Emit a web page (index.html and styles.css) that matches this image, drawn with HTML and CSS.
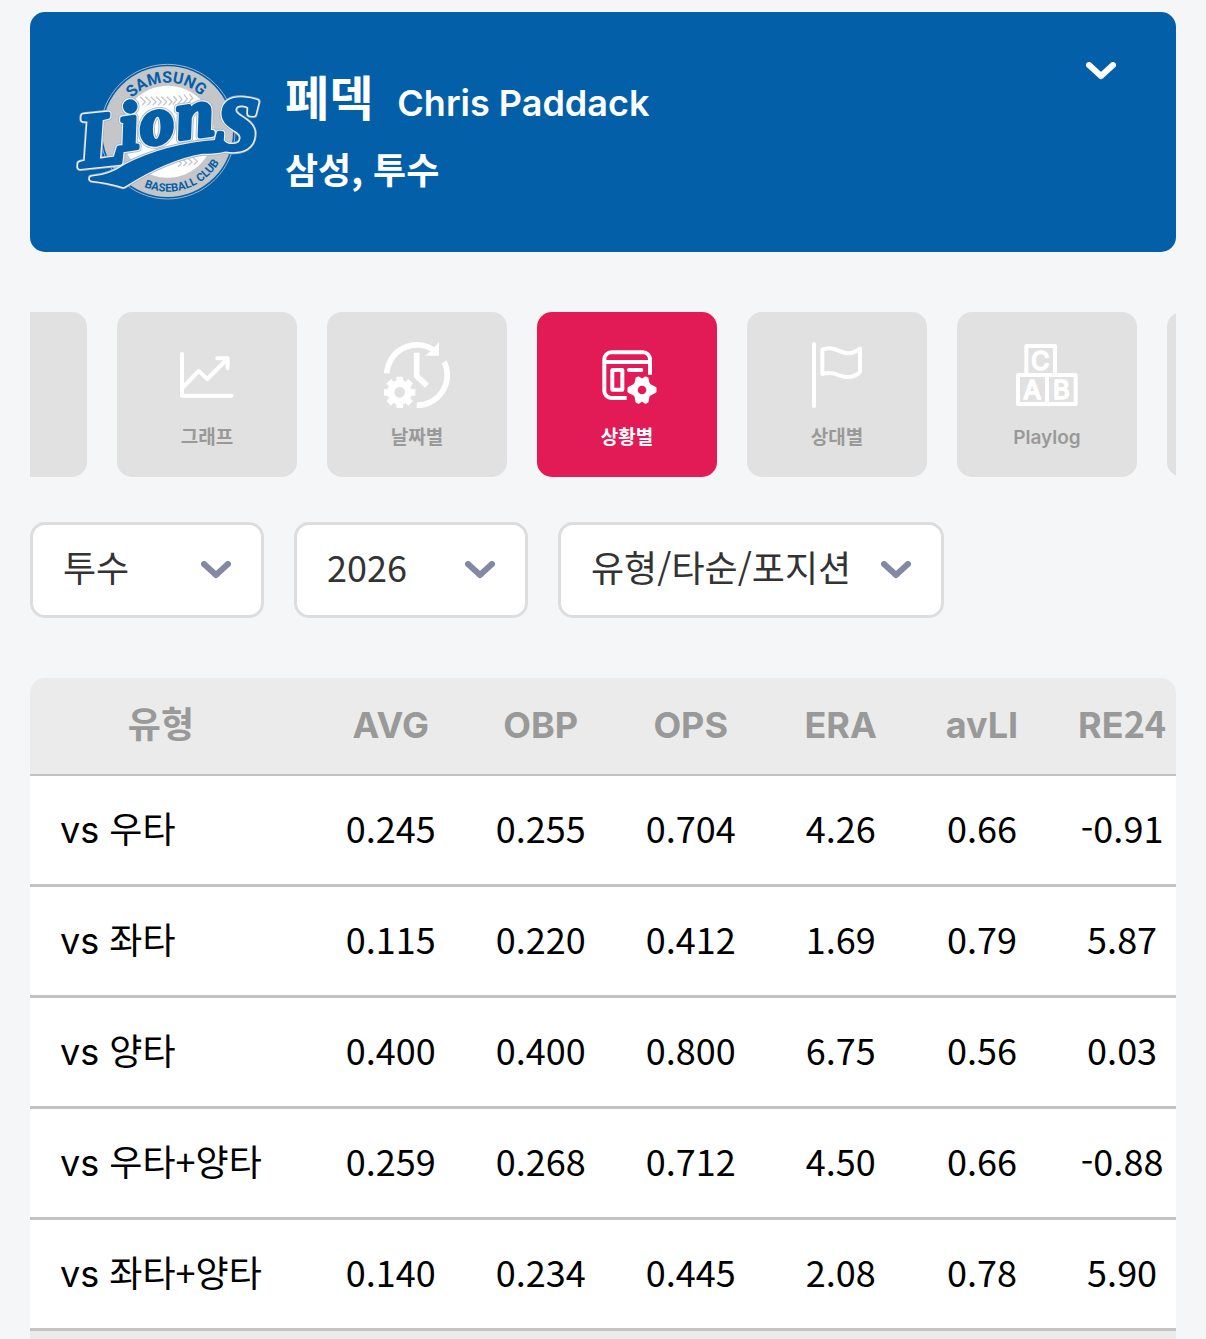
FILE: index.html
```html
<!DOCTYPE html>
<html lang="ko">
<head>
    <meta charset="UTF-8">
    <meta name="viewport" content="width=device-width, initial-scale=1.0">
    <title>페덱 - 상황별 기록</title>
    <link rel="stylesheet" href="styles.css">
</head>
<body>
    <div class="container">
        <header class="player">
            <svg class="team-logo" viewBox="45 39 540 414" role="img" aria-label="Samsung Lions">
                <defs>
                    <path id="arcTop" d="M176 245 A147 147 0 0 1 470 245"/>
                    <path id="arcBottom" d="M143 245 A180 180 0 0 0 503 245"/>
                    <g id="wordmark">
                        <path d="M96 386 Q150 382 196 350 Q320 286 478 276 Q492 298 512 290 Q480 308 430 304 Q320 322 190 405 Q140 390 96 386Z"/>
                        <text class="logo-word" x="188 248 356" y="300 287 268" rotate="-8">ion</text>
                        <text class="logo-word big" x="62" y="350" rotate="-6">L</text>
                        <text class="logo-word big" x="462" y="294" rotate="4">S</text>
                    </g>
                </defs>
                <circle class="logo-ring" cx="323" cy="245" r="202"/>
                <circle class="logo-disc" cx="323" cy="245" r="196"/>
                <circle class="logo-ball" cx="323" cy="245" r="138"/>
                <g class="logo-seam">
                    <path d="M240 140 L256 155 L246 166 M256 140 L272 155 L262 166 M272 140 L288 155 L278 166 M288 140 L304 155 L294 166 M304 140 L320 155 L310 166 M320 140 L336 155 L326 166 M340 138 L350 150 L338 164 M356 136 L366 148 L354 162 M372 134 L382 146 L370 160 M388 132 L398 144 L386 158"/>
                    <path d="M350 328 L364 340 L354 350 M364 324 L380 338 L370 348 M380 322 L396 336 L386 346 M396 320 L412 334 L402 344"/>
                </g>
                <text class="logo-arc"><textPath href="#arcTop" startOffset="49%">SAMSUNG</textPath></text>
                <text class="logo-arc logo-small"><textPath href="#arcBottom" startOffset="60%">BASEBALL CLUB</textPath></text>
                <use class="logo-edge" href="#wordmark"/>
                <use class="logo-line" href="#wordmark"/>
                <use class="logo-face" href="#wordmark"/>
            </svg>
            <div class="player-info">
                <h1>페덱 <span class="name-en">Chris Paddack</span></h1>
                <p>삼성, 투수</p>
            </div>
            <button type="button" class="player-toggle" aria-label="선수 정보 열기">
                <svg class="chevron" viewBox="0 0 30 18"><path d="M3 3 L15 14 L27 3"/></svg>
            </button>
        </header>

        <nav class="tabs" id="tabs">
            <a class="tab" href="#" aria-label="이전 메뉴"></a>
            <a class="tab" href="#graph">
                <svg viewBox="0 0 198 198">
                    <g class="line">
                        <path d="M24 36 V161 H173"/>
                        <path d="M26 137 L74 87 L100 111 L160 51"/>
                        <path d="M130 49 H161 V79"/>
                    </g>
                </svg>
                그래프
            </a>
            <a class="tab" href="#date">
                <svg viewBox="0 0 198 198">
                    <g class="line butt">
                        <path d="M8 94 A91 91 0 0 1 148 23"/>
                        <path d="M181 60 A91 91 0 0 1 98 190"/>
                        <path d="M98 32 V102 L129 131"/>
                        <path class="teeth" d="M47 104 V198 M0 151 H94 M14 118 L80 184 M80 118 L14 184"/>
                    </g>
                    <path class="solid" d="M165 0 V41 H123 L142 26Z M174 69 L187 53 L191 68Z"/>
                    <circle class="solid" cx="47" cy="151" r="37"/>
                    <circle class="hole" cx="47" cy="151" r="16"/>
                </svg>
                날짜별
            </a>
            <a class="tab active" href="#situation" aria-current="page">
                <svg viewBox="0 0 198 198">
                    <g class="line">
                        <path class="flat" d="M168 98 V52 A21 21 0 0 0 147 31 H52 A21 21 0 0 0 31 52 V147 A21 21 0 0 0 52 168 H98 M31 60 H168"/>
                        <rect x="55" y="84" width="30" height="59"/>
                        <path d="M105 84 H142"/>
                    </g>
                    <path class="solid gear" d="M128 109 L134 107 L144 114 L154 107 L160 109 L163 124 L168 130 L184 138 L184 149 L168 157 L163 163 L160 179 L154 182 L144 174 L134 182 L128 179 L125 163 L120 157 L104 149 L104 138 L120 130 L125 124Z"/>
                    <circle class="hole" cx="144" cy="144" r="13"/>
                </svg>
                상황별
            </a>
            <a class="tab" href="#opponent">
                <svg viewBox="0 0 198 198">
                    <g class="line">
                        <path d="M30 6 V192"/>
                        <path d="M55 23 C88 9 108 34 134 34 C148 34 158 27 168 20 V91 C148 108 128 108 108 101 C90 92 72 91 55 96Z"/>
                    </g>
                </svg>
                상대별
            </a>
            <a class="tab" href="#playlog">
                <svg viewBox="0 0 198 198">
                    <g class="line">
                        <rect x="37" y="12" width="86" height="87"/>
                        <rect x="12" y="99" width="173" height="87"/>
                        <path d="M99 99 V186"/>
                    </g>
                    <g class="block-letters">
                        <text x="79" y="84">C</text>
                        <text x="55" y="171">A</text>
                        <text x="142" y="171">B</text>
                    </g>
                </svg>
                Playlog
            </a>
            <a class="tab" href="#" aria-label="다음 메뉴"></a>
        </nav>

        <form class="filters">
            <div class="select">
                <select name="position" aria-label="포지션">
                    <option>투수</option>
                </select>
                <svg class="chevron" viewBox="0 0 30 18"><path d="M3 3 L15 14 L27 3"/></svg>
            </div>
            <div class="select">
                <select name="year" aria-label="시즌">
                    <option>2026</option>
                </select>
                <svg class="chevron" viewBox="0 0 30 18"><path d="M3 3 L15 14 L27 3"/></svg>
            </div>
            <div class="select">
                <select name="split" aria-label="구분">
                    <option>유형/타순/포지션</option>
                </select>
                <svg class="chevron" viewBox="0 0 30 18"><path d="M3 3 L15 14 L27 3"/></svg>
            </div>
        </form>

        <div class="table-wrap">
            <table>
                <thead>
                    <tr><th>유형</th><th>AVG</th><th>OBP</th><th>OPS</th><th>ERA</th><th>avLI</th><th>RE<span class="num">24</span></th></tr>
                </thead>
                <tbody>
                    <tr><td><span class="en">vs</span> 우타</td><td>0.245</td><td>0.255</td><td>0.704</td><td>4.26</td><td>0.66</td><td>-0.91</td></tr>
                    <tr><td><span class="en">vs</span> 좌타</td><td>0.115</td><td>0.220</td><td>0.412</td><td>1.69</td><td>0.79</td><td>5.87</td></tr>
                    <tr><td><span class="en">vs</span> 양타</td><td>0.400</td><td>0.400</td><td>0.800</td><td>6.75</td><td>0.56</td><td>0.03</td></tr>
                    <tr><td><span class="en">vs</span> 우타+양타</td><td>0.259</td><td>0.268</td><td>0.712</td><td>4.50</td><td>0.66</td><td>-0.88</td></tr>
                    <tr><td><span class="en">vs</span> 좌타+양타</td><td>0.140</td><td>0.234</td><td>0.445</td><td>2.08</td><td>0.78</td><td>5.90</td></tr>
                </tbody>
                <tfoot>
                    <tr><td colspan="7"></td></tr>
                </tfoot>
            </table>
        </div>
    </div>

    <script>
        // start a little way along so the active tab is near the middle
        document.getElementById('tabs').scrollLeft = 123;
    </script>
</body>
</html>
```
FILE: styles.css
```css
* {
    box-sizing: border-box;
}
body {
    margin: 0;
    background-color: #f4f6f8;
    font-family: "Noto Sans CJK KR", sans-serif;
    font-size: 36px;
    color: #000;
}
.container {
    padding: 12px 30px 0;
}
.en {
    font-family: Inter, sans-serif;
}
.num {
    font-family: "Noto Sans CJK KR", sans-serif;
    line-height: 1;
}

/* player card */
.player {
    display: flex;
    align-items: center;
    gap: 30px;
    padding: 45px;
    height: 240px;
    border-radius: 15px;
    background-color: #045fa9;
    color: #fff;
}
.team-logo {
    width: 180px;
    height: 138px;
    flex: none;
    overflow: visible;
}
.player-info {
    flex: 1;
}
h1 {
    display: flex;
    align-items: baseline;
    gap: 24px;
    margin: 0;
    font-size: 48px;
    line-height: 72px;
    font-weight: 700;
}
.name-en {
    font-family: Inter, sans-serif;
    font-size: 36px;
    font-weight: 600;
}
.player p {
    margin: 0;
    padding-bottom: 8px;
    line-height: 58px;
    font-weight: 700;
}
.player-toggle {
    align-self: flex-start;
    display: flex;
    margin-right: 15px;
    padding: 5px 0;
    border: none;
    background: none;
    color: #fff;
    cursor: pointer;
}
.chevron {
    width: 30px;
    height: 18px;
    fill: none;
    stroke: currentColor;
    stroke-width: 6;
    stroke-linecap: round;
    stroke-linejoin: round;
}

/* team logo */
.logo-ring {
    fill: #045fa9;
    stroke: #9fb6cc;
    stroke-width: 3;
}
.logo-disc {
    fill: #c4c6c9;
}
.logo-ball {
    fill: #fff;
}
.logo-seam {
    fill: none;
    stroke: #c4c6c9;
    stroke-width: 4;
}
.logo-arc {
    font-family: Roboto, sans-serif;
    font-size: 48px;
    font-weight: 700;
    text-anchor: middle;
    fill: #045fa9;
}
.logo-small {
    font-size: 34px;
}
.logo-word {
    font-family: "Liberation Serif", serif;
    font-size: 204px;
    font-style: italic;
    font-weight: 700;
}
.logo-word.big {
    font-size: 228px;
}
.logo-edge {
    stroke: #a9b3c0;
    stroke-width: 25;
    stroke-linejoin: round;
}
.logo-line {
    stroke: #eef3f8;
    stroke-width: 20;
    stroke-linejoin: round;
}
.logo-face {
    fill: #045fa9;
    stroke: #045fa9;
    stroke-width: 13;
    stroke-linejoin: round;
}

/* tabs */
.tabs {
    display: flex;
    gap: 30px;
    margin-top: 60px;
    overflow-x: auto;
    scrollbar-width: none;
}
.tab {
    display: flex;
    flex: none;
    flex-direction: column;
    align-items: center;
    gap: 16px;
    width: 180px;
    height: 165px;
    padding-top: 30px;
    border-radius: 15px;
    background-color: #e1e1e1;
    color: #999;
    font-family: Inter, "Noto Sans CJK KR", sans-serif;
    font-size: 19px;
    line-height: 28px;
    font-weight: 600;
    text-decoration: none;
}
.tab.active {
    background-color: #e21a56;
    color: #fff;
}
.tab svg {
    width: 66px;
    height: 66px;
}
.line {
    fill: none;
    stroke: #fff;
    stroke-width: 12;
    stroke-linecap: round;
    stroke-linejoin: round;
}
.butt {
    stroke-width: 17;
    stroke-linecap: butt;
    stroke-linejoin: miter;
}
.flat {
    stroke-linecap: butt;
}
.teeth {
    stroke-width: 20;
}
.solid {
    fill: #fff;
}
.gear {
    stroke: #fff;
    stroke-width: 7;
    stroke-linejoin: round;
}
.hole {
    fill: #e1e1e1;
}
.active .hole {
    fill: #e21a56;
}
.block-letters {
    font-family: Inter, sans-serif;
    font-size: 76px;
    font-weight: 500;
    text-anchor: middle;
    fill: #fff;
    stroke: #fff;
    stroke-width: 4;
    stroke-linejoin: round;
}

/* filters */
.filters {
    display: flex;
    gap: 30px;
    margin-top: 45px;
}
.select {
    display: grid;
    align-items: center;
    min-width: 234px;
    color: #8388a4;
}
.select select,
.select .chevron {
    grid-area: 1 / 1;
}
.select .chevron {
    justify-self: end;
    margin-right: 33px;
    pointer-events: none;
}
.select select {
    appearance: none;
    width: 100%;
    height: 96px;
    padding: 0 89px 9px 30px;
    border: 3px solid #ddd;
    border-radius: 15px;
    background-color: #fff;
    color: #333;
    font-family: inherit;
    font-size: 36px;
}

/* stats table */
.table-wrap {
    margin-top: 60px;
    border-radius: 15px 15px 0 0;
    overflow-x: auto;
    scrollbar-width: none;
}
table {
    min-width: 100%;
    border-spacing: 0;
    white-space: nowrap;
}
th, td {
    padding: 0 30px 7px;
    text-align: center;
}
th:first-child,
td:first-child {
    padding-right: 54px;
}
th:nth-child(5) {
    min-width: 150px;
}
th {
    height: 98px;
    padding-bottom: 3px;
    background-color: #ebebeb;
    border-bottom: 2px solid #c3c3c3;
    color: #999;
    font-family: Inter, "Noto Sans CJK KR", sans-serif;
    font-weight: 700;
    line-height: 44px;
}
td {
    height: 111px;
    background-color: #fff;
    border-bottom: 3px solid #c3c3c3;
}
tbody td:first-child {
    text-align: left;
}
tfoot td {
    height: 9px;
    border: none;
    background-color: #ebebeb;
}
```
